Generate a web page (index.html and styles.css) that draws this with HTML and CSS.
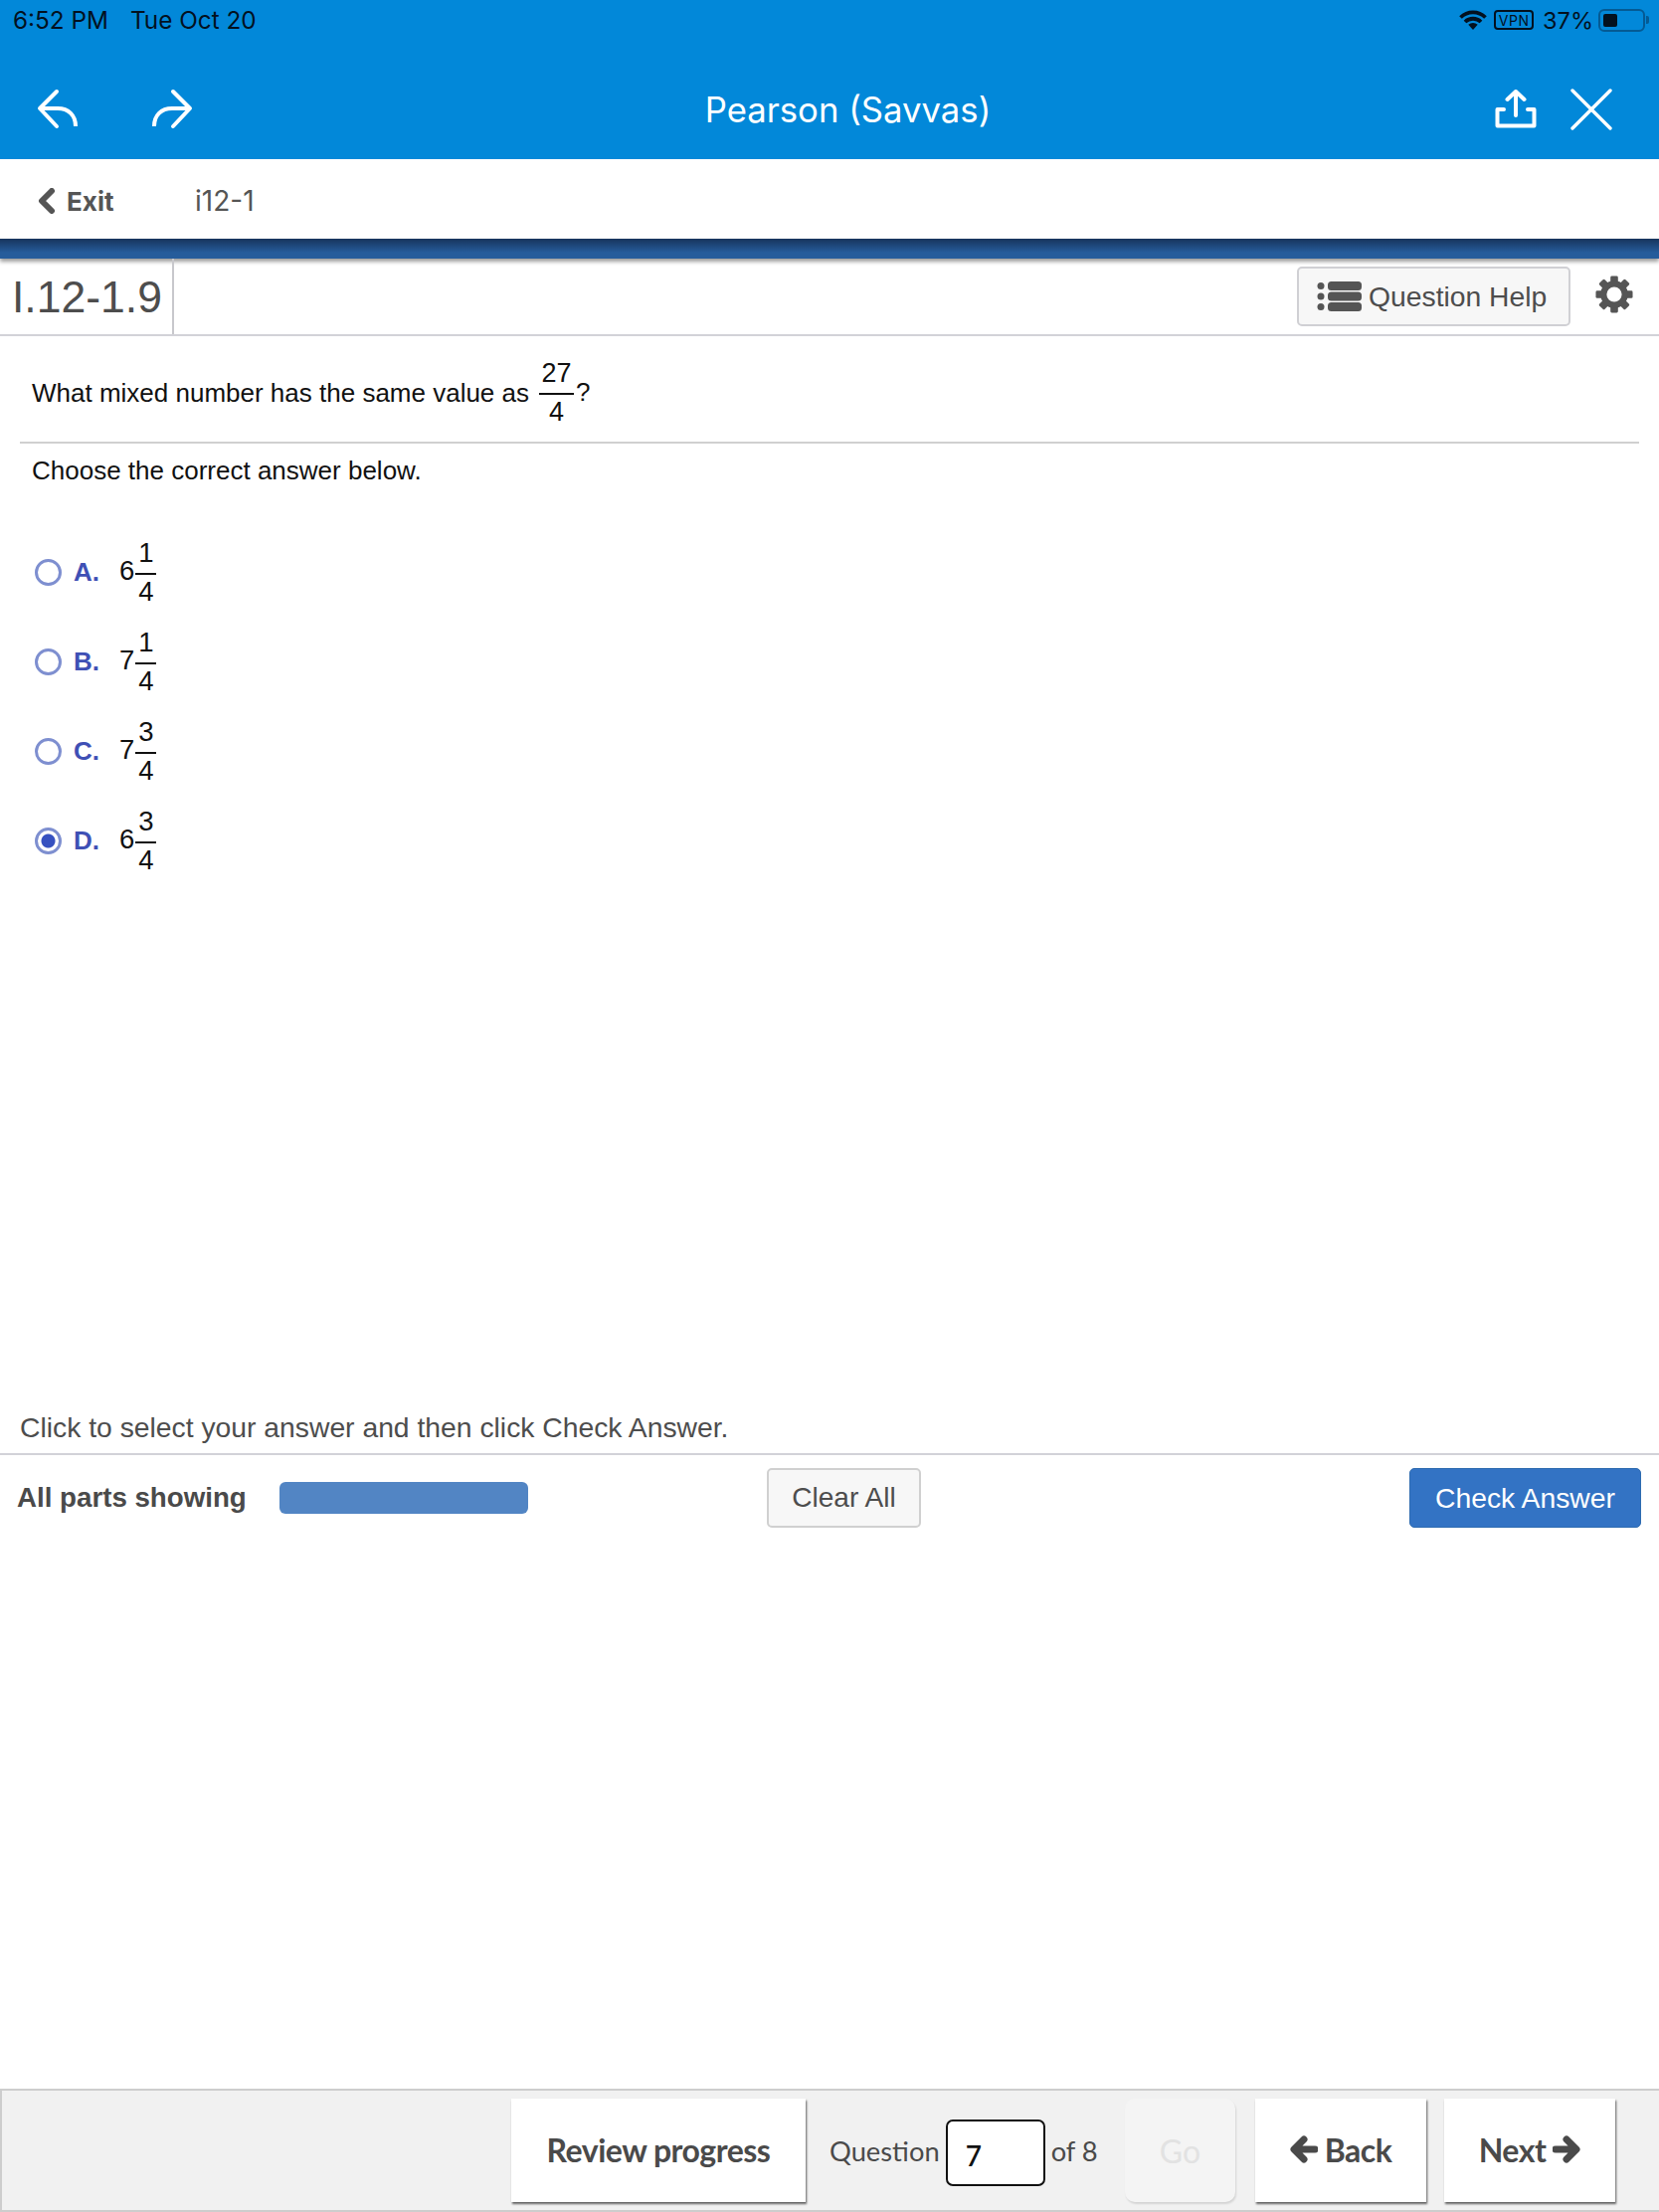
FILE: index.html
```html
<!DOCTYPE html>
<html lang="en">
<head>
<meta charset="UTF-8" />
<meta name="viewport" content="width=device-width, initial-scale=1.0"/>
<title>Pearson (Savvas)</title>
<link rel="stylesheet" href="styles.css">
</head>
<body>

<div class="page">
  <header class="top">
    <div class="status">
      <div class="status-left">
        <span>6:52 PM</span>
        <span>Tue Oct 20</span>
      </div>
      <div class="status-right">
        <svg class="wifi" width="28" height="20" viewBox="0 0 28 20">
          <path d="M1.500 7.500a18 18 0 0 1 25 0M6 12a11.500 11.500 0 0 1 16 0" fill="none" stroke="#03111f" stroke-width="3.800"/>
          <path d="M9.300 14.800a7 7 0 0 1 9.400 0L14 20z" fill="#03111f"/>
        </svg>
        <span class="vpn">VPN</span>
        <span class="pct">37%</span>
        <div class="battery"><div class="battery-fill"></div></div>
        <div class="battery-tip"></div>
      </div>
    </div>
    <nav class="navbar">
      <div class="nav-group nav-left">
        <svg width="42" height="42" viewBox="0 0 42 42" fill="none" stroke="#fff" stroke-width="4" stroke-linecap="round" stroke-linejoin="round">
          <path d="M20 3 3 20l17 18"/>
          <path d="M3 20h18c11 0 18 7 18 18" stroke-linecap="butt"/>
        </svg>
        <svg width="42" height="42" viewBox="0 0 42 42" fill="none" stroke="#fff" stroke-width="4" stroke-linecap="round" stroke-linejoin="round">
          <path d="M22 3l17 17-17 18"/>
          <path d="M39 20H21C10 20 3 27 3 38" stroke-linecap="butt"/>
        </svg>
      </div>
      <div class="nav-title">Pearson (Savvas)</div>
      <div class="nav-group nav-right">
        <svg width="42" height="42" viewBox="0 0 42 42" fill="none" stroke="#fff" stroke-width="4" stroke-linecap="round" stroke-linejoin="round">
          <path d="M21 3v24M12.500 11 21 3l8.500 8"/>
          <path d="M9 21H2.500v16.500h37V21H33"/>
        </svg>
        <svg width="42" height="42" viewBox="0 0 42 42" fill="none" stroke="#fff" stroke-width="3.400" stroke-linecap="round">
          <path d="M2 2l38 38M40 2 2 40"/>
        </svg>
      </div>
    </nav>
  </header>

  <div class="subbar">
    <a class="exit">
      <svg width="18" height="26" viewBox="0 0 18 26" fill="none" stroke="#555" stroke-width="6" stroke-linecap="round" stroke-linejoin="round">
        <path d="M14 3 4 13l10 10"/>
      </svg>
      Exit
    </a>
    <span class="crumb">i12-1</span>
  </div>
  <div class="band"></div>

  <div class="qhead">
    <div class="qnum">I.12-1.9</div>
    <div class="qtools">
      <button class="help-btn">
        <svg width="46" height="30" viewBox="0 0 46 30" fill="#555">
          <circle cx="4" cy="4.500" r="3.500"/><circle cx="4" cy="15" r="3.500"/><circle cx="4" cy="25.500" r="3.500"/>
          <rect x="11" y="0" width="34" height="9" rx="3.500"/>
          <rect x="11" y="10.500" width="34" height="9" rx="3.500"/>
          <rect x="11" y="21" width="34" height="9" rx="3.500"/>
        </svg>
        Question Help
      </button>
      <svg class="gear" width="38" height="38" viewBox="0 0 40 40">
        <g fill="#555">
          <rect x="16" y="0.500" width="8" height="39" rx="1.500"/>
          <rect x="16" y="0.500" width="8" height="39" rx="1.500" transform="rotate(45 20 20)"/>
          <rect x="16" y="0.500" width="8" height="39" rx="1.500" transform="rotate(90 20 20)"/>
          <rect x="16" y="0.500" width="8" height="39" rx="1.500" transform="rotate(135 20 20)"/>
          <circle cx="20" cy="20" r="14.500"/>
        </g>
        <circle cx="20" cy="20" r="8" fill="#fff"/>
      </svg>
    </div>
  </div>

  <main class="content">
    <div class="prompt">
      <span class="prompt-text">What mixed number has the same value as</span>
      <span class="frac frac-wide"><span class="num">27</span><span class="den">4</span></span>
      <span class="qmark">?</span>
    </div>
    <div class="choose">Choose the correct answer below.</div>

    <div class="options">
      <div class="option">
        <span class="radio"></span><span class="letter">A.</span>
        <span class="whole">6</span>
        <span class="frac"><span class="num">1</span><span class="den">4</span></span>
      </div>
      <div class="option">
        <span class="radio"></span><span class="letter">B.</span>
        <span class="whole">7</span>
        <span class="frac"><span class="num">1</span><span class="den">4</span></span>
      </div>
      <div class="option">
        <span class="radio"></span><span class="letter">C.</span>
        <span class="whole">7</span>
        <span class="frac"><span class="num">3</span><span class="den">4</span></span>
      </div>
      <div class="option">
        <span class="radio selected"></span><span class="letter">D.</span>
        <span class="whole">6</span>
        <span class="frac"><span class="num">3</span><span class="den">4</span></span>
      </div>
    </div>
  </main>

  <div class="hint">Click to select your answer and then click Check Answer.</div>
  <div class="actions">
    <div class="parts">
      <strong>All parts showing</strong>
      <div class="parts-bar"></div>
    </div>
    <button class="clear-btn">Clear All</button>
    <button class="check-btn">Check Answer</button>
  </div>

  <div class="spacer"></div>

  <footer class="footer">
    <button class="foot-btn review">Review progress</button>
    <div class="jump">
      <span>Question</span>
      <input class="jump-input" type="text" value="7" />
      <span>of 8</span>
    </div>
    <button class="go-btn">Go</button>
    <button class="foot-btn back">
      <svg width="28" height="28" viewBox="0 0 28 28" fill="none" stroke="#4a4a4a" stroke-width="7" stroke-linecap="round" stroke-linejoin="round">
        <path d="M14 4 4 14l10 10M5 14h20"/>
      </svg>
      Back
    </button>
    <button class="foot-btn next">
      Next
      <svg width="28" height="28" viewBox="0 0 28 28" fill="none" stroke="#4a4a4a" stroke-width="7" stroke-linecap="round" stroke-linejoin="round">
        <path d="M14 4l10 10-10 10M23 14H3"/>
      </svg>
    </button>
  </footer>
</div>

</body>
</html>
```

FILE: styles.css
```css
* {
  box-sizing: border-box;
}
body {
  margin: 0;
  font-family: "Liberation Sans", Arial, sans-serif;
  background-color: #fff;
}
button {
  font-family: inherit;
  cursor: pointer;
}
.page {
  height: 2224px;
  display: flex;
  flex-direction: column;
  overflow: hidden;
}

/* blue header */
.top {
  height: 160px;
  background-color: #0288d9;
  font-family: Inter, sans-serif;
}
.status {
  height: 40px;
  padding: 0 10px 0 13px;
  display: flex;
  justify-content: space-between;
  align-items: center;
  color: #03111f;
  font-size: 24.300px;
}
.status-left {
  display: flex;
  gap: 22px;
}
.status-right {
  display: flex;
  align-items: center;
}
.wifi {
  margin-right: 7px;
}
.vpn {
  width: 40px;
  height: 20px;
  margin-right: 9px;
  border: 2px solid #03111f;
  border-radius: 4px;
  font-size: 14px;
  line-height: 17px;
  text-align: center;
  letter-spacing: 0.5px;
}
.pct {
  font-size: 23.500px;
}
.battery {
  width: 47px;
  height: 23px;
  margin-left: 5px;
  padding: 3px;
  border: 2px solid #045a94;
  border-radius: 6px;
}
.battery-fill {
  width: 14px;
  height: 100%;
  background-color: #03111f;
  border-radius: 2px;
}
.battery-tip {
  width: 3px;
  height: 8px;
  margin-left: 1px;
  background-color: #045a94;
  border-radius: 0 2px 2px 0;
}
.navbar {
  height: 120px;
  padding: 20px 47px 0 37px;
  display: flex;
  justify-content: space-between;
  align-items: center;
}
.nav-group {
  display: flex;
  align-items: center;
}
.nav-left {
  gap: 73px;
}
.nav-right {
  gap: 34px;
}
.nav-title {
  padding-left: 8px;
  color: #fff;
  font-size: 34.700px;
}

/* exit bar */
.subbar {
  height: 80px;
  padding: 4px 38px 0;
  display: flex;
  align-items: center;
  font-family: Inter, sans-serif;
  font-size: 28px;
  color: #555;
}
.exit {
  width: 158px;
  display: flex;
  align-items: center;
  gap: 11px;
  font-size: 26px;
  font-weight: 700;
}
.band {
  height: 20px;
  background: linear-gradient(#17345c, #265c9b 70%);
  box-shadow: 0 3px 4px rgba(0, 0, 0, 0.4);
}

/* question title row */
.qhead {
  height: 78px;
  padding-right: 26px;
  display: flex;
  justify-content: space-between;
  border-bottom: 2px solid #d2d2d8;
}
.qnum {
  width: 175px;
  height: 76px;
  padding-left: 12px;
  border-right: 2px solid #c8c8cc;
  font-size: 44.500px;
  line-height: 78px;
  color: #4d4d4d;
}
.qtools {
  display: flex;
  align-items: center;
  gap: 25px;
}
.help-btn {
  width: 275px;
  height: 60px;
  padding: 0 0 0 18px;
  display: flex;
  align-items: center;
  gap: 6px;
  border: 2px solid #d0d0d4;
  border-radius: 5px;
  background-color: #f7f7f7;
  color: #4d4d4d;
  font-size: 28.300px;
}
.gear {
  margin-bottom: 4px;
}

/* question body */
.content {
  height: 1078px;
  padding: 0 20px;
  color: #111;
  font-size: 26px;
}
.prompt {
  height: 108px;
  padding: 7px 12px 0;
  display: flex;
  align-items: center;
  border-bottom: 2px solid #d0d0d0;
}
.prompt-text {
  margin-top: 2px;
}
.frac {
  display: inline-flex;
  flex-direction: column;
  align-items: center;
  line-height: 32px;
}
.frac-wide {
  width: 35px;
  margin: 0 2px 0 10px;
  font-size: 27px;
}
.num {
  width: 100%;
  padding-bottom: 4px;
  border-bottom: 2px solid #111;
  text-align: center;
}
.den {
  padding-top: 1px;
}
.choose {
  padding: 11px 12px 0;
  line-height: 32px;
}
.options {
  margin-top: 41px;
  padding-left: 15px;
}
.option {
  height: 90px;
  display: flex;
  align-items: center;
}
.radio {
  width: 27px;
  height: 27px;
  flex: none;
  border: 3px solid #7e8fd0;
  border-radius: 50%;
}
.radio.selected {
  background: radial-gradient(circle, #3651c0 0 6.500px, #fff 7.500px);
}
.letter {
  width: 46px;
  margin-left: 12px;
  color: #3f50b5;
  font-weight: 700;
}
.whole {
  margin-top: -2px;
  font-size: 27.500px;
}
.option .frac {
  width: 21px;
  margin-left: 1px;
  font-size: 27.500px;
}

/* answer controls */
.hint {
  height: 47px;
  padding-left: 20px;
  color: #4d4d4d;
  font-size: 28.300px;
  line-height: 38px;
  border-bottom: 2px solid #d2d2d8;
}
.actions {
  height: 86px;
  padding: 0 18px 0 17px;
  display: flex;
  align-items: center;
}
.parts {
  width: 754px;
  display: flex;
  align-items: center;
  gap: 33px;
  color: #4a4a4a;
  font-size: 27.700px;
}
.parts-bar {
  width: 250px;
  height: 32px;
  background-color: #5285c4;
  border-radius: 6px;
}
.clear-btn {
  width: 155px;
  height: 60px;
  border: 2px solid #d0d0d0;
  border-radius: 5px;
  background-color: #f7f7f7;
  color: #4d4d4d;
  font-size: 28px;
}
.check-btn {
  width: 233px;
  height: 60px;
  margin-left: auto;
  border: 1px solid #2e6bb0;
  border-radius: 5px;
  background-color: #3373c4;
  color: #fff;
  font-size: 28.300px;
}
.spacer {
  flex: 1;
}

/* bottom nav */
.footer {
  height: 124px;
  padding: 0 44px 0 512px;
  display: flex;
  align-items: center;
  background-color: #f1f1f1;
  border-top: 2px solid #cdcdcd;
  border-bottom: 2px solid #cdcdcd;
  border-left: 2px solid #cdcdcd;
  font-family: Lato, sans-serif;
  color: #4a4a4a;
  font-size: 27.300px;
}
.foot-btn {
  height: 104px;
  padding: 0 0 2px;
  display: flex;
  align-items: center;
  justify-content: center;
  gap: 7px;
  border: none;
  background-color: #fff;
  box-shadow: 1px 2px 2px rgba(0, 0, 0, 0.6);
  color: #4a4a4a;
  font-family: inherit;
  font-size: 32px;
  font-weight: 700;
  letter-spacing: -0.5px;
  white-space: nowrap;
}
.review {
  width: 296px;
}
.back, .next {
  width: 172px;
}
.back {
  margin-left: 20px;
}
.next {
  margin-left: 18px;
}
.jump {
  width: 321px;
  padding-left: 24px;
  display: flex;
  align-items: center;
  gap: 6px;
  white-space: nowrap;
}
.jump-input {
  width: 100px;
  height: 67px;
  margin-top: 5px;
  padding: 4px 0 0 18px;
  border: 2px solid #111;
  border-radius: 7px;
  background-color: #fff;
  color: #111;
  font-family: inherit;
  font-size: 28px;
  font-weight: 600;
}
.go-btn {
  width: 111px;
  height: 104px;
  padding: 0;
  border: none;
  border-radius: 10px;
  background-color: #f4f4f4;
  box-shadow: 1px 2px 2px rgba(0, 0, 0, 0.12);
  color: #e2e2e2;
  font-family: inherit;
  font-size: 32px;
}
```
